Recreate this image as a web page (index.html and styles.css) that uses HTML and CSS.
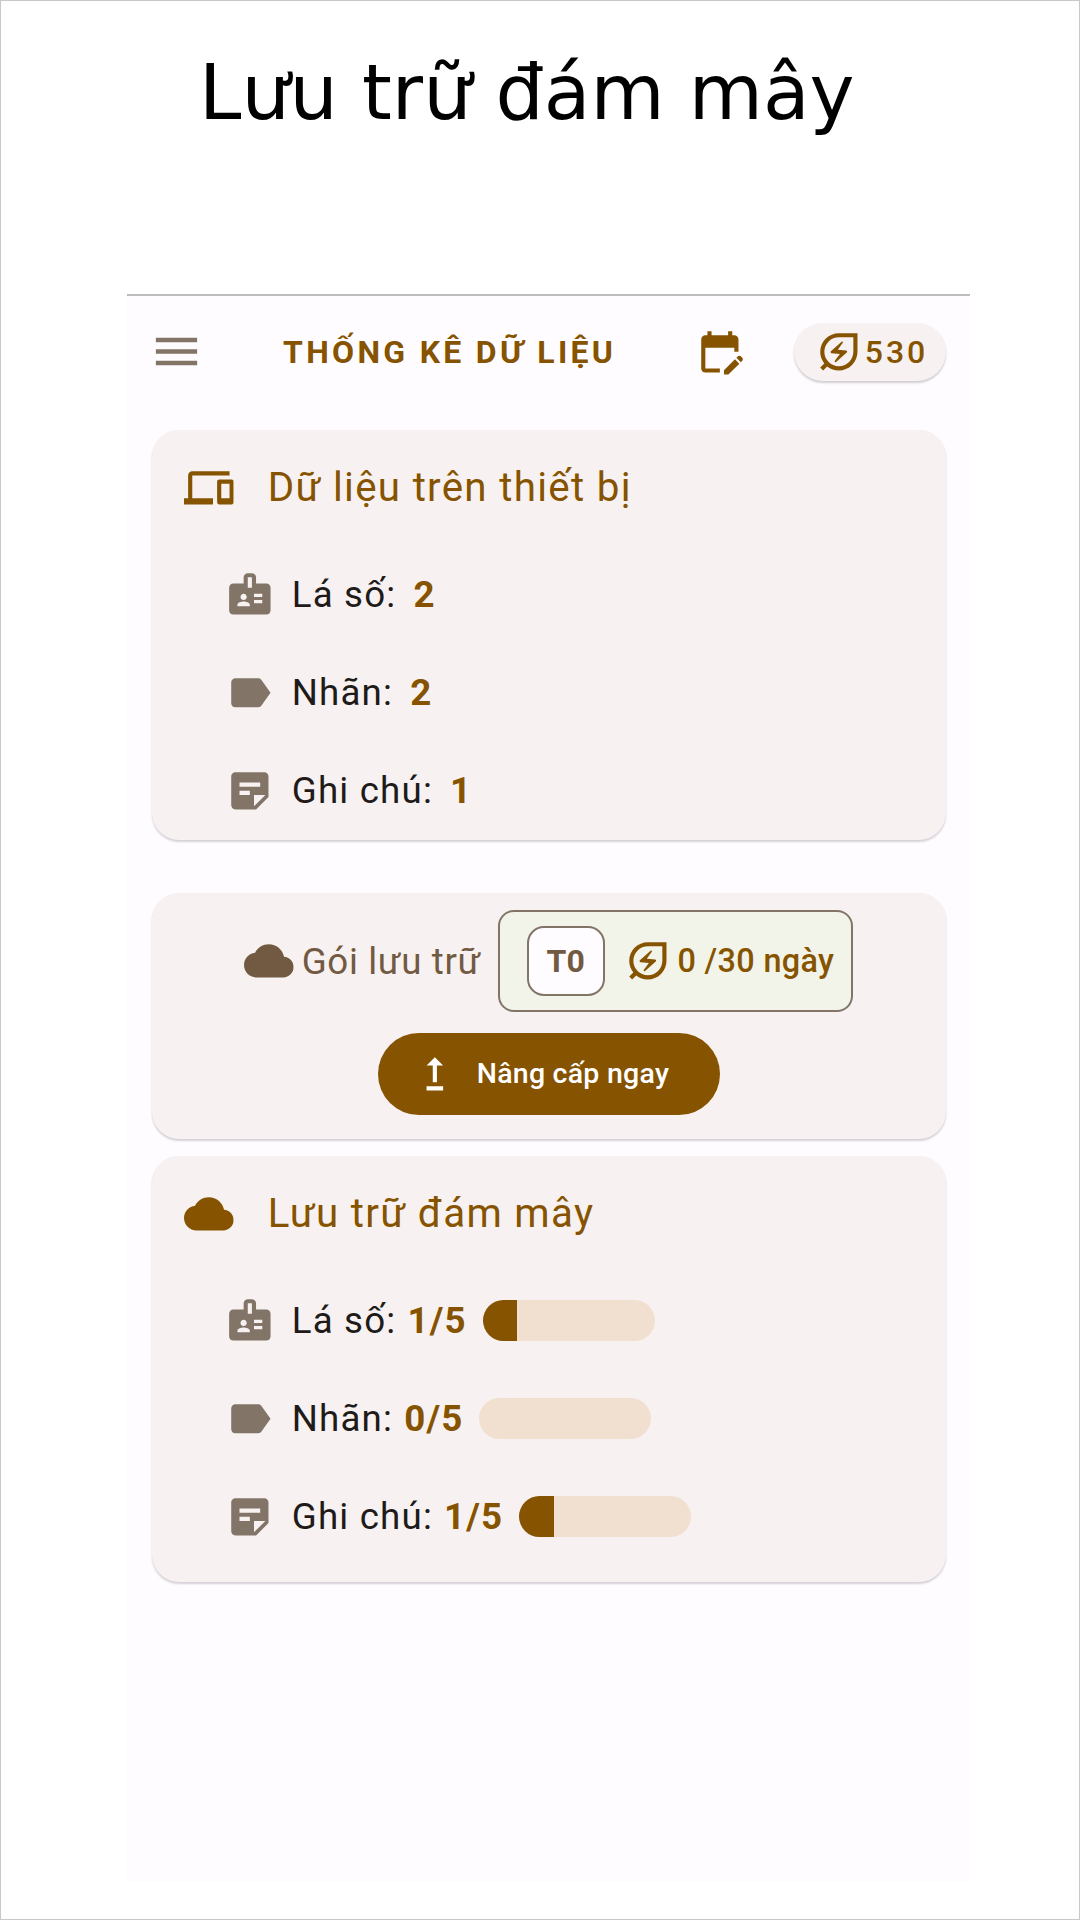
FILE: index.html
```html
<!DOCTYPE html>
<html lang="vi">
<head>
<meta charset="utf-8">
<title>Lưu trữ đám mây</title>
<link rel="stylesheet" href="styles.css">
</head>
<body>
<svg class="sprite" aria-hidden="true">
  <symbol id="i-menu" viewBox="0 0 24 24"><path d="M3 18h18v-2H3v2zm0-5h18v-2H3v2zm0-7v2h18V6H3z"/></symbol>
  <symbol id="i-calendar" viewBox="0 0 24 24"><path d="M12 22H5c-1.11 0-2-.9-2-2L3.010 6c0-1.100.880-2 1.990-2h1V2h2v2h8V2h2v2h1c1.100 0 2 .9 2 2v6h-2v-2H5v10h7v2zM22.130 16.990l.71-.71c.39-.39.39-1.020 0-1.410l-.71-.71c-.39-.39-1.020-.39-1.410 0l-.71.71 2.120 2.120zM21.420 17.700l-5.300 5.300H14v-2.120l5.300-5.300 2.120 2.120z"/></symbol>
  <symbol id="i-energy" viewBox="0 0 24 24"><path d="M12 3c-4.800 0-9 3.860-9 9 0 2.120.74 4.070 1.970 5.610L3 19.590 4.410 21l1.970-1.970C7.930 20.260 9.880 21 12 21c2.300 0 4.610-.88 6.360-2.640C20.120 16.610 21 14.300 21 12V3h-9zm7 9c0 1.870-.73 3.630-2.050 4.950C15.630 18.270 13.870 19 12 19c-3.860 0-7-3.140-7-7 0-1.900.74-3.680 2.100-4.990C8.420 5.710 10.160 5 12 5h7v7z"/><path d="M8.460 12.630l4.050.4-2.440 3.330c-.11.16-.1.38.04.52.15.15.4.16.56.01l5.160-4.630c.33-.3.15-.85-.3-.89l-4.050-.4 2.440-3.330c.11-.16.1-.38-.04-.52-.15-.15-.4-.16-.56-.01l-5.160 4.640c-.33.29-.15.84.3.88z"/></symbol>
  <symbol id="i-devices" viewBox="0 0 24 24"><path d="M4 6h18V4H4c-1.100 0-2 .9-2 2v11H0v3h14v-3H4V6zm19 2h-6c-.55 0-1 .45-1 1v10c0 .55.45 1 1 1h6c.55 0 1-.45 1-1V9c0-.55-.45-1-1-1zm-1 9h-4v-7h4v7z"/></symbol>
  <symbol id="i-badge" viewBox="0 0 24 24"><path d="M20 7h-5V4c0-1.100-.9-2-2-2h-2c-1.100 0-2 .9-2 2v3H4c-1.100 0-2 .9-2 2v11c0 1.100.9 2 2 2h16c1.100 0 2-.9 2-2V9c0-1.100-.9-2-2-2zM9 12c.83 0 1.500.67 1.500 1.500S9.830 15 9 15s-1.500-.67-1.500-1.500S8.170 12 9 12zm3 6H6v-.75c0-1 2-1.500 3-1.500s3 .5 3 1.500V18zm1-9h-2V4h2v5zm5 7.500h-4V15h4v1.500zm0-3h-4V12h4v1.500z"/></symbol>
  <symbol id="i-label" viewBox="0 0 24 24"><path d="M17.630 5.840C17.270 5.330 16.670 5 16 5L5 5.010C3.900 5.010 3 5.900 3 7v10c0 1.100.9 1.990 2 1.990L16 19c.67 0 1.270-.33 1.630-.84L22 12l-4.370-6.160z"/></symbol>
  <symbol id="i-note" viewBox="0 0 24 24"><path d="M19 3H4.990C3.890 3 3 3.900 3 5l.01 14c0 1.100.89 2 1.990 2h10l6-6V5c0-1.100-.9-2-2-2zM7 8h10v2H7V8zm5 6H7v-2h5v2zm2 5.500V14h5.500L14 19.500z"/></symbol>
  <symbol id="i-cloud" viewBox="0 0 24 24"><path d="M19.350 10.040C18.670 6.590 15.640 4 12 4 9.110 4 6.600 5.640 5.350 8.040 2.340 8.360 0 10.910 0 14c0 3.310 2.690 6 6 6h13c2.760 0 5-2.240 5-5 0-2.640-2.050-4.780-4.650-4.960z"/></symbol>
  <symbol id="i-upgrade" viewBox="0 0 24 24"><path d="M16 18v2H8v-2h8zM11 7.990V16h2V7.990h3L12 4 8 7.990h3z"/></symbol>
</svg>

<h1 class="headline">Lưu trữ đám mây</h1>

<main class="screen">
  <header class="appbar">
    <svg class="icon icon-menu"><use href="#i-menu"/></svg>
    <h2 class="appbar-title">THỐNG KÊ DỮ LIỆU</h2>
    <svg class="icon icon-calendar"><use href="#i-calendar"/></svg>
    <div class="balance"><svg class="icon"><use href="#i-energy"/></svg><span>530</span></div>
  </header>

  <section class="card card-device">
    <div class="card-head"><svg class="icon"><use href="#i-devices"/></svg><span>Dữ liệu trên thiết bị</span></div>
    <div class="row"><svg class="icon"><use href="#i-badge"/></svg><span>Lá số:</span><b class="count">2</b></div>
    <div class="row"><svg class="icon"><use href="#i-label"/></svg><span>Nhãn:</span><b class="count">2</b></div>
    <div class="row"><svg class="icon"><use href="#i-note"/></svg><span>Ghi chú:</span><b class="count">1</b></div>
  </section>

  <section class="card card-plan">
    <div class="plan">
      <svg class="icon"><use href="#i-cloud"/></svg>
      <span class="plan-name">Gói lưu trữ</span>
      <div class="plan-box">
        <span class="tier">T0</span>
        <svg class="icon"><use href="#i-energy"/></svg>
        <span class="price">0 /30 ngày</span>
      </div>
    </div>
    <button class="upgrade"><svg class="icon"><use href="#i-upgrade"/></svg><span>Nâng cấp ngay</span></button>
  </section>

  <section class="card card-cloud">
    <div class="card-head"><svg class="icon"><use href="#i-cloud"/></svg><span>Lưu trữ đám mây</span></div>
    <div class="row"><svg class="icon"><use href="#i-badge"/></svg><span>Lá số:</span><b class="quota">1/5</b><div class="bar"><div class="bar-fill" style="width:20%"></div></div></div>
    <div class="row"><svg class="icon"><use href="#i-label"/></svg><span>Nhãn:</span><b class="quota">0/5</b><div class="bar"><div class="bar-fill" style="width:0%"></div></div></div>
    <div class="row"><svg class="icon"><use href="#i-note"/></svg><span>Ghi chú:</span><b class="quota">1/5</b><div class="bar"><div class="bar-fill" style="width:20%"></div></div></div>
  </section>
</main>
</body>
</html>
```
FILE: styles.css
```css
* { box-sizing: border-box; }

body {
  margin: 0;
  width: 1080px;
  height: 1920px;
  border: 1px solid #c8c8c8;
  background: #fff;
  font-family: Roboto, "Noto Sans", sans-serif;
  color: #201a19;
  overflow: hidden;
}

.sprite { display: none; }

.icon {
  display: block;
  flex: none;
  width: 49.7px;
  height: 49.7px;
  fill: currentColor;
}

.headline {
  margin: 0;
  height: 293px;
  padding: 47px 0 0 198px;
  font: 400 76.1px/90px "DejaVu Sans", sans-serif;
  color: #000;
  white-space: nowrap;
}

.screen {
  width: 843px;
  height: 1588px;
  margin-left: 126px;
  padding: 0 24px 0 25px;
  border-top: 2px solid #bdbdbd;
  background: #fefcff;
}

.appbar {
  display: flex;
  align-items: center;
  height: 111px;
  color: #865300;
}

.icon-menu {
  width: 55px;
  height: 55px;
  margin-left: -3px;
  color: #827568;
}

.appbar-title {
  width: 412px;
  margin: 0;
  padding-left: 79px;
  font-size: 32px;
  font-weight: 700;
  line-height: 40px;
  letter-spacing: 3.3px;
  white-space: nowrap;
}

.icon-calendar { margin-left: 79px; }

.balance {
  display: flex;
  align-items: center;
  width: 152px;
  height: 58px;
  margin-left: auto;
  padding-left: 20px;
  border-radius: 29px;
  background: #f7f2f1;
  box-shadow: 0 2px 2px rgba(60, 45, 60, .22), 0 0 1px rgba(60, 45, 60, .06);
  font-size: 32px;
  font-weight: 500;
  letter-spacing: 3px;
}

.balance span { margin-left: 1px; }

.card {
  border-radius: 27px;
  background: #f7f2f1;
  box-shadow: 0 2px 2px rgba(60, 45, 60, .2), 0 0 1px rgba(60, 45, 60, .06);
}

.card-device { height: 410px; margin-top: 23px; padding-top: 8px; }
.card-plan { height: 246px; margin-top: 53px; padding-top: 17px; }
.card-cloud { height: 426px; margin-top: 17px; padding-top: 8px; }

.card-head {
  display: flex;
  align-items: center;
  gap: 34px;
  height: 99px;
  padding-left: 32px;
  color: #865300;
  font-size: 40.3px;
  letter-spacing: 1.3px;
}

.row {
  display: flex;
  align-items: center;
  height: 98.3px;
  padding-left: 73px;
  font-size: 36.7px;
  letter-spacing: 1.2px;
  white-space: nowrap;
}

.card-device .row:nth-child(2),
.card-cloud .row:nth-child(2) { margin-top: 8px; }

.row .icon { margin-right: 17px; color: #827568; }

.count, .quota { color: #865300; font-weight: 700; }
.count { margin-left: 17px; }
.quota { margin-left: 11px; }

.bar {
  width: 172px;
  height: 41px;
  margin-left: 16px;
  border-radius: 20.5px;
  background: #f1dfd0;
  overflow: hidden;
}

.bar-fill { height: 100%; background: #865300; }

.plan {
  display: flex;
  align-items: center;
  padding-left: 92px;
  color: #725a42;
}

.plan-name { width: 195px; padding-left: 8px; font-size: 36.7px; letter-spacing: .65px; white-space: nowrap; }

.plan-box {
  display: flex;
  align-items: center;
  width: 355px;
  height: 102px;
  margin-left: 9px;
  padding-left: 27px;
  border: 2px solid #827568;
  border-radius: 16px;
  background: #f2f4ea;
  color: #865300;
  font-size: 32px;
  font-weight: 500;
}

.tier {
  width: 78px;
  height: 70px;
  margin-right: 18px;
  border: 2px solid #827568;
  border-radius: 17px;
  background: #fefcff;
  color: #725a42;
  font-weight: 700;
  line-height: 66px;
  text-align: center;
}

.price { margin-left: 5px; font-size: 32.4px; letter-spacing: .35px; white-space: nowrap; }

.upgrade {
  display: flex;
  align-items: center;
  width: 342px;
  height: 82px;
  margin: 21px auto 0;
  padding: 0 0 0 32px;
  border: 0;
  border-radius: 41px;
  background: #865300;
  color: #fff;
  font: 500 28.5px/40px Roboto, "Noto Sans", sans-serif;
  letter-spacing: .25px;
  white-space: nowrap;
}

.upgrade span { margin-left: 17px; }
```
